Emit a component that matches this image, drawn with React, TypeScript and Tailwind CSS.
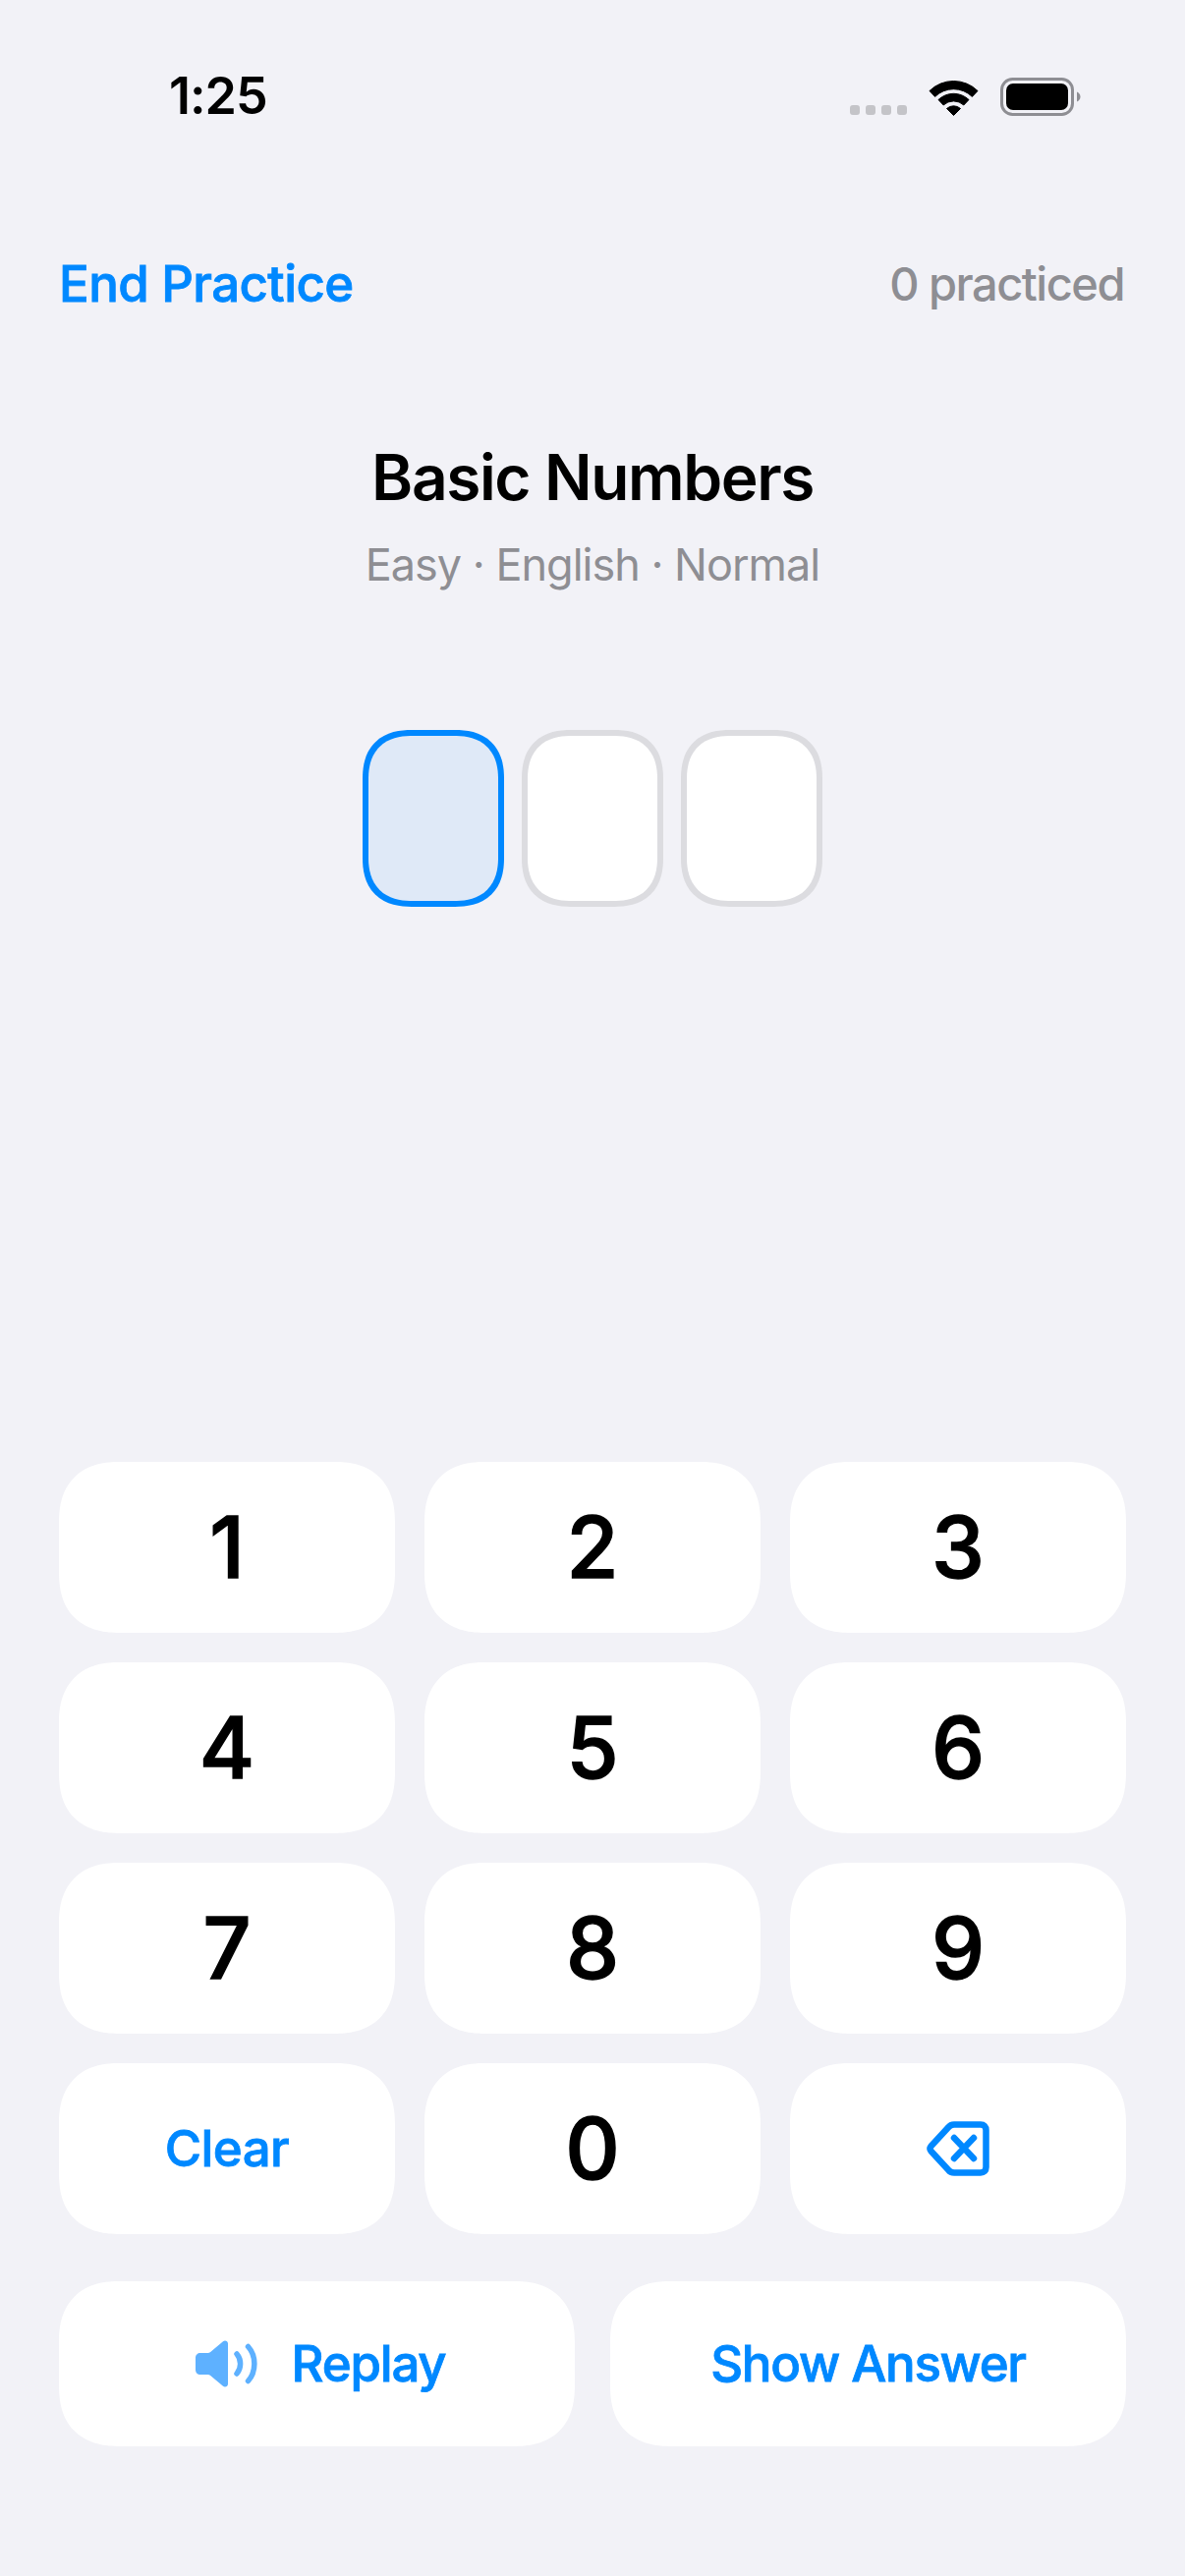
const DIGITS = ['1', '2', '3', '4', '5', '6', '7', '8', '9'];

function WifiIcon() {
  return (
    <svg width="51" height="37" viewBox="0 0 51 37" fill="#000" stroke="#000" strokeWidth="1" strokeLinejoin="round">
      <path d="M1 11.5A35 35 0 0 1 50 11.5L44.4 17.4A27 27 0 0 0 6.6 17.4Z" />
      <path d="M10 20.5A22.5 22.5 0 0 1 41 20.5L35.8 26A15 15 0 0 0 15.2 26Z" />
      <path d="M18.5 29.5A10.5 10.5 0 0 1 32.5 29.5L25.5 36.5Z" />
    </svg>
  );
}

function BatteryIcon() {
  return (
    <svg width="82" height="39" viewBox="0 0 82 39" fill="none">
      <rect x="1.500" y="1.500" width="72" height="36" rx="11" stroke="#8e8e93" strokeWidth="3" />
      <rect x="6" y="6" width="63" height="27" rx="7" fill="#000" />
      <path d="M78 14.500C80 15.500 81.500 17 81.500 19.500C81.500 22 80 23.500 78 24.500Z" fill="#8e8e93" />
    </svg>
  );
}

function SpeakerIcon() {
  return (
    <svg width="64" height="48" viewBox="0 0 64 48" fill="none">
      <path
        d="M5 13H12.500C13.500 13 14.500 12.600 15.200 12L28 1.200C30 -0.400 33 0.800 33 3.500V44.500C33 47.200 30 48.400 28 46.800L15.200 36C14.500 35.400 13.500 35 12.500 35H5C2 35 0 33 0 30V18C0 15 2 13 5 13Z"
        fill="#5eb1ff"
      />
      <path d="M42 14C46.800 19.500 46.800 28.500 42 34" stroke="#5eb1ff" strokeWidth="5.500" strokeLinecap="round" />
      <path d="M53.500 6.500C62 16 62 32 53.500 41.500" stroke="#5eb1ff" strokeWidth="5.500" strokeLinecap="round" />
    </svg>
  );
}

function DeleteIcon() {
  return (
    <svg width="64" height="56" viewBox="0 0 64 56" fill="none" stroke="#0088ff" strokeWidth="6.500" strokeLinecap="round" strokeLinejoin="round">
      <path d="M4.500 25.500L22 6.500C23.500 4.500 25.500 3.500 28 3.500H55C58.500 3.500 60.500 5.500 60.500 9V47C60.500 50.500 58.500 52.500 55 52.500H28C25.500 52.500 23.500 51.500 22 49.500L4.500 30.500C3.300 29 3.300 27 4.500 25.500Z" />
      <path d="M28 17L48 38M48 17L28 38" />
    </svg>
  );
}

function KeyButton({ children }: { children: React.ReactNode }) {
  return (
    <button className="flex h-[174px] items-center justify-center rounded-[62px] bg-white [corner-shape:superellipse(1.25)]">
      {children}
    </button>
  );
}

export default function App() {
  return (
    <div className="flex h-[2622px] w-[1206px] flex-col bg-[#f2f2f7] font-['Inter','Liberation_Sans',sans-serif]">
      {/* Status bar */}
      <div className="flex h-[120px] items-start justify-between pl-[172px] pr-[106px] pt-[67px]">
        <span className="text-[52px] font-semibold leading-[62px] tracking-[-1px] text-black">1:25</span>
        <div className="flex items-end pt-[12px]">
          <div className="mb-[1px] flex gap-[6px]">
            <span className="h-[10px] w-[10px] rounded-[3px] bg-[#c4c4c8]" />
            <span className="h-[10px] w-[10px] rounded-[3px] bg-[#c4c4c8]" />
            <span className="h-[10px] w-[10px] rounded-[3px] bg-[#c4c4c8]" />
            <span className="h-[10px] w-[10px] rounded-[3px] bg-[#c4c4c8]" />
          </div>
          <div className="ml-[22px] mr-[22px]">
            <WifiIcon />
          </div>
          <BatteryIcon />
        </div>
      </div>

      {/* Nav row */}
      <div className="mt-[139px] flex items-center justify-between pl-[60px] pr-[62px]">
        <span className="text-[51px] font-medium leading-[60px] tracking-[-0.6px] text-[#0088ff] [-webkit-text-stroke:0.8px_#0088ff]">End Practice</span>
        <span className="text-[47px] font-medium leading-[60px] tracking-[-1.5px] text-[#8e8e93]">0 practiced</span>
      </div>

      {/* Title */}
      <div className="mt-[129px] text-center">
        <h1 className="text-[64px] font-semibold leading-[76px] tracking-[-1.4px] text-black">Basic Numbers</h1>
        <p className="mt-[24px] text-[45px] leading-[54px] tracking-[-1px] text-[#8e8e93]">Easy · English · Normal</p>
      </div>

      {/* Answer slots */}
      <div className="mt-[141px] flex justify-center gap-[18px]">
        <div className="h-[180px] w-[144px] rounded-[50px] border-[6px] border-[#0088ff] bg-[#dfe9f7] [corner-shape:superellipse(1.25)]" />
        <div className="h-[180px] w-[144px] rounded-[50px] border-[6px] border-[#dcdce0] bg-white [corner-shape:superellipse(1.25)]" />
        <div className="h-[180px] w-[144px] rounded-[50px] border-[6px] border-[#dcdce0] bg-white [corner-shape:superellipse(1.25)]" />
      </div>

      {/* Keypad */}
      <div className="mt-auto px-[60px] pb-[132px]">
        <div className="grid grid-cols-3 gap-[30px]">
          {DIGITS.map((d) => (
            <KeyButton key={d}>
              <span className="text-[86px] font-medium leading-none text-black [-webkit-text-stroke:1.4px_#000]">{d}</span>
            </KeyButton>
          ))}
          <KeyButton>
            <span className="text-[51px] font-medium tracking-[-0.6px] text-[#0088ff] [-webkit-text-stroke:0.8px_#0088ff]">Clear</span>
          </KeyButton>
          <KeyButton>
            <span className="text-[86px] font-medium leading-none text-black [-webkit-text-stroke:1.4px_#000]">0</span>
          </KeyButton>
          <KeyButton>
            <DeleteIcon />
          </KeyButton>
        </div>

        <div className="mt-[48px] grid grid-cols-2 gap-[36px]">
          <button className="flex h-[168px] items-center justify-center gap-[34px] rounded-[62px] bg-white pl-[7px] [corner-shape:superellipse(1.25)]">
            <SpeakerIcon />
            <span className="text-[51px] font-medium tracking-[-1.2px] text-[#0088ff] [-webkit-text-stroke:0.8px_#0088ff]">Replay</span>
          </button>
          <button className="flex h-[168px] items-center justify-center rounded-[62px] bg-white [corner-shape:superellipse(1.25)]">
            <span className="text-[51px] font-medium tracking-[-1.3px] text-[#0088ff] [-webkit-text-stroke:0.8px_#0088ff]">Show Answer</span>
          </button>
        </div>
      </div>
    </div>
  );
}
